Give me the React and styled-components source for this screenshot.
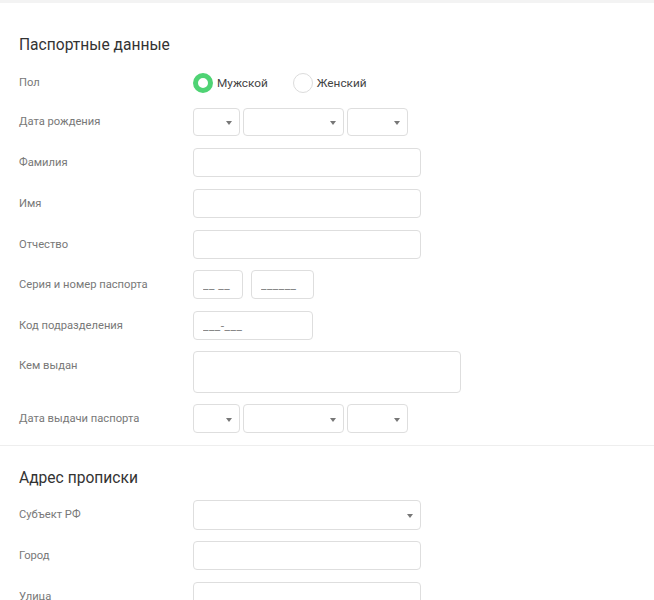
import React, { useState } from 'react';
import styled, { createGlobalStyle } from 'styled-components';

const GlobalStyle = createGlobalStyle`
  html, body {
    margin: 0;
    padding: 0;
    background: #fff;
  }
  body {
    font-family: Roboto, "Liberation Sans", Arial, sans-serif;
  }
  * {
    box-sizing: border-box;
  }
`;

const Page = styled.div`
  width: 654px;
  min-height: 600px;
  border-top: 3px solid #f3f3f3;
  background: #fff;
`;

// first section gets the divider underneath
const Section = styled.section`
  padding: ${(p) => (p.$first ? '32px' : '22px')} 0 ${(p) => (p.$divided ? '12px' : '0')};
  padding-left: ${(p) => (p.$divided ? '24px' : '19px')};
  margin-left: ${(p) => (p.$divided ? '-5px' : '0')};
  border-bottom: ${(p) => (p.$divided ? '1px solid #eeeeee' : 'none')};
`;

const Heading = styled.h2`
  margin: 0 0 ${(p) => p.$mb ?? 13}px;
  font-size: 15.6px;
  line-height: 20px;
  font-weight: 400;
  color: #333;
`;

const Row = styled.div`
  display: flex;
  align-items: flex-start;
  margin-bottom: ${(p) => p.$gap ?? 11}px;
`;

const Label = styled.label`
  width: 174px;
  flex-shrink: 0;
  font-size: 11.2px;
  line-height: 29px;
  color: #787878;
`;

const Field = styled.div`
  display: flex;
  align-items: center;
  gap: ${(p) => p.$gap ?? 3}px;
  min-height: 29px;
`;

const Input = styled.input`
  width: ${(p) => p.$w}px;
  height: 29px;
  padding: 0 9px;
  border: 1px solid #dedede;
  border-radius: 4px;
  background: #fff;
  font-family: inherit;
  font-size: 12px;
  color: #333;
  outline: none;

  &::placeholder {
    color: #888;
    letter-spacing: 0.5px;
  }
`;

const TextArea = styled.textarea`
  width: 268px;
  height: 42px;
  border: 1px solid #dedede;
  border-radius: 4px;
  resize: none;
  font-family: inherit;
  outline: none;
`;

const SelectBox = styled.div`
  position: relative;
  width: ${(p) => p.$w}px;
  height: ${(p) => p.$h ?? 28}px;
  border: 1px solid #dedede;
  border-radius: 4px;
  background: #fff;

  &::after {
    content: '';
    position: absolute;
    right: 7px;
    top: 50%;
    margin-top: -1px;
    border-left: 3px solid transparent;
    border-right: 3px solid transparent;
    border-top: 4px solid #777;
  }
`;

const RadioGroup = styled.div`
  display: flex;
  align-items: center;
  gap: 25px;
  height: 29px;
`;

const RadioOption = styled.label`
  display: flex;
  align-items: center;
  gap: 4px;
  font-size: 11.8px;
  color: #444;
  cursor: pointer;
`;

const RadioDot = styled.span`
  width: 20px;
  height: 20px;
  border-radius: 50%;
  background: #fff;
  border: ${(p) => (p.$checked ? '5px solid #4fd374' : '1px solid #dcdcdc')};
`;

const DateSelects = ({ h }) => (
  <Field>
    <SelectBox $w={47} $h={h} />
    <SelectBox $w={101} $h={h} />
    <SelectBox $w={61} $h={h} />
  </Field>
);

export default function App() {
  const [gender, setGender] = useState('m');

  return (
    <>
      <GlobalStyle />
      <Page>
        <Section $first $divided>
          <Heading>Паспортные данные</Heading>

          <Row $gap={10}>
            <Label>Пол</Label>
            <RadioGroup>
              <RadioOption onClick={() => setGender('m')}>
                <RadioDot $checked={gender === 'm'} />
                Мужской
              </RadioOption>
              <RadioOption onClick={() => setGender('f')}>
                <RadioDot $checked={gender === 'f'} />
                Женский
              </RadioOption>
            </RadioGroup>
          </Row>

          <Row $gap={12}>
            <Label>Дата рождения</Label>
            <DateSelects />
          </Row>

          <Row $gap={12}>
            <Label>Фамилия</Label>
            <Input $w={228} />
          </Row>

          <Row $gap={12}>
            <Label>Имя</Label>
            <Input $w={228} />
          </Row>

          <Row>
            <Label>Отчество</Label>
            <Input $w={228} />
          </Row>

          <Row $gap={12}>
            <Label>Серия и номер паспорта</Label>
            <Field $gap={8}>
              <Input $w={50} placeholder="__ __" />
              <Input $w={63} placeholder="______" />
            </Field>
          </Row>

          <Row>
            <Label>Код подразделения</Label>
            <Input $w={120} placeholder="___-___" />
          </Row>

          <Row>
            <Label>Кем выдан</Label>
            <TextArea />
          </Row>

          <Row $gap={0}>
            <Label>Дата выдачи паспорта</Label>
            <DateSelects h={29} />
          </Row>
        </Section>

        <Section>
          <Heading $mb={12}>Адрес прописки</Heading>

          <Row>
            <Label>Субъект РФ</Label>
            <SelectBox $w={228} $h={30} />
          </Row>

          <Row $gap={12}>
            <Label>Город</Label>
            <Input $w={228} />
          </Row>

          <Row>
            <Label>Улица</Label>
            <Input $w={228} />
          </Row>
        </Section>
      </Page>
    </>
  );
}
